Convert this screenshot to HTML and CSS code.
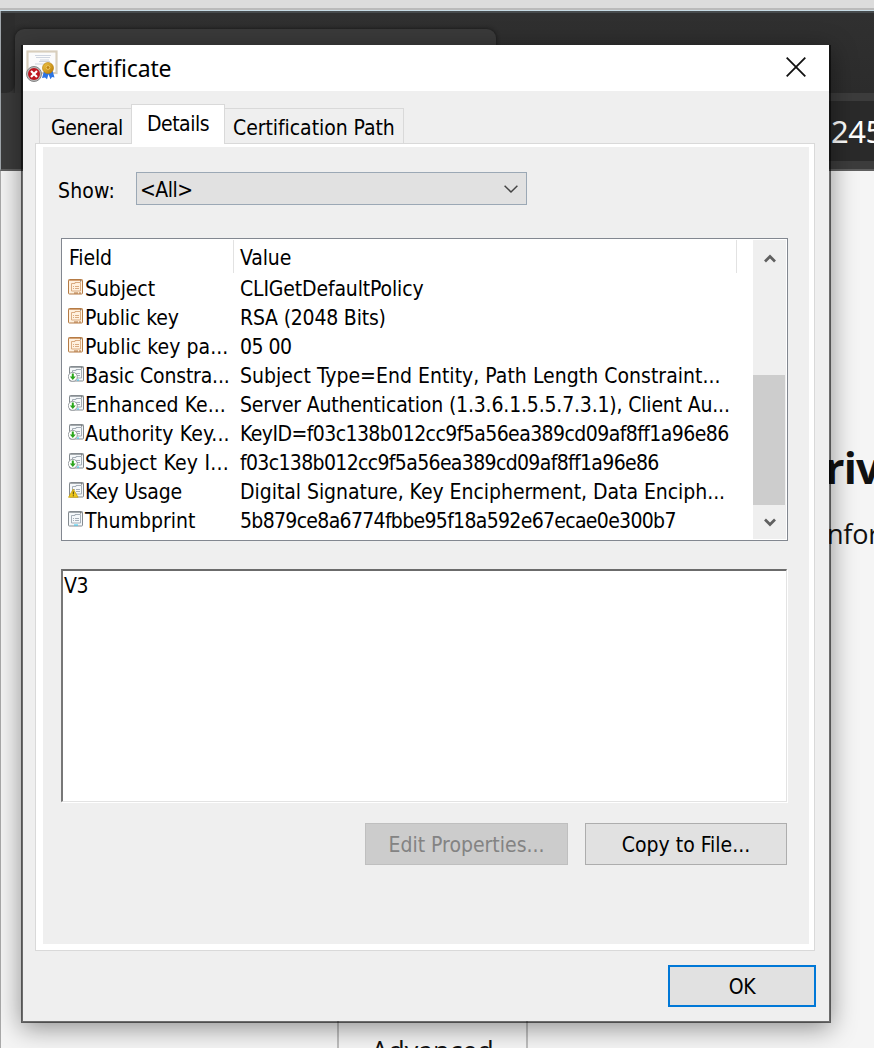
FILE: index.html
```
<!DOCTYPE html>
<html lang="en">
<head>
<meta charset="utf-8">
<title>Certificate</title>
<link rel="stylesheet" href="styles.css">
</head>
<body>
<svg class="defs" aria-hidden="true">
  <defs>
    <linearGradient id="gold" x2="1" y2="1"><stop stop-color="#efc64a"/><stop offset="1" stop-color="#b87900"/></linearGradient>
    <symbol id="sheet" viewBox="0 0 16 16">
      <rect x=".5" y=".5" width="14" height="14.5" rx=".8" class="frame"/>
      <path d="M1 1.500h13" class="band"/>
      <path d="M3.500 4.500h3.500v-1h5.500v8.500H3.500zM5 7.500h1M7 7.500h4M5 9.500h1M7 9.500h4" class="rule"/>
      <path d="M12 2h1.200" class="dot"/>
    </symbol>
    <symbol id="v1" viewBox="0 0 16 16"><use href="#sheet"/><path d="M6 14h4M11 14h2" stroke="#ad6f39"/></symbol>
    <symbol id="plain" viewBox="0 0 16 16"><use href="#sheet"/><path d="M6 14h4" stroke="#31c8f1"/></symbol>
    <symbol id="ext" viewBox="-1 0 16 16"><use href="#sheet" width="16" height="16"/><path d="M8 14h2" stroke="#31c8f1"/><circle cx="3.800" cy="10.800" r="4.500" fill="#fff" stroke="#858b90" stroke-width=".8"/><path d="M2.800 7.500h2v3h2l-3 3.600-3-3.600h2z" fill="#2ba51c"/></symbol>
    <symbol id="crit" viewBox="-1 0 16 16"><use href="#sheet" width="16" height="16"/><path d="M4.300 7-.5 15.300h9.600z" fill="#f0c91c" stroke="#c29a0c" stroke-width=".7"/><path d="M3.800 9.500h1v3h-1zM3.800 13.300h1v1h-1z" fill="#443b15"/></symbol>
  </defs>
</svg>
<div class="browser">
  <div class="edge"></div>
  <div class="tabstrip"><div class="gap"></div><div class="browser-tab"></div></div>
  <div class="toolbar"><div class="address">245</div></div>
  <div class="page">
    <h1>riv</h1>
    <p>nfor</p>
    <div class="advanced">Advanced</div>
  </div>
</div>

<div class="dialog">
  <header class="titlebar">
    <svg class="cert" viewBox="0 0 32 32">
      <rect x="1.500" y="1.500" width="29" height="21.500" fill="#fff" stroke="#d8cebd" stroke-width="2.200"/>
      <rect x="3" y="3" width="26" height="19" fill="#fbfbfc"/>
      <path d="M9 5.500h16M10 7.500h14M14 10h9M13 11.500h11M9 14h14" stroke="#c9d0dc" stroke-width=".9"/>
      <path d="M18 21l-2 7 3-.5 2 1.800 1.500-5 2 5 1.500-2.200 2.500.5-2-7z" fill="#2c74e4"/>
      <circle cx="22" cy="18" r="5.500" fill="url(#gold)" stroke="#b27700" stroke-width=".6"/>
      <circle cx="22" cy="17.500" r="1.900" fill="#bd8210" stroke="#f2d173" stroke-width=".8"/>
      <circle cx="8" cy="24" r="7.500" fill="#b9b9b9" stroke="#858585" stroke-width="1"/>
      <circle cx="8" cy="24" r="6" fill="#bd1520"/>
      <path d="M5 21l6 6M11 21l-6 6" stroke="#fff" stroke-width="2.200"/>
    </svg>
    <span class="title">Certificate</span>
    <svg class="close" viewBox="0 0 20 20"><path d="M.7.7 19.300 19.300M19.300.7.7 19.300"/></svg>
  </header>
  <nav class="tabs">
    <div class="tab general"><span>General</span></div>
    <div class="tab active"><span>Details</span></div>
    <div class="tab path"><span>Certification Path</span></div>
  </nav>
  <main class="pane">
    <div class="panel">
      <div class="show"><span class="label">Show:</span>
        <div class="combo"><span>&lt;All&gt;</span><svg viewBox="0 0 14 8"><path d="M.6.8 7 7 13.400.8"/></svg></div>
      </div>
      <div class="list">
        <div class="table">
          <div class="row head"><div>Field</div><div>Value</div></div>
          <div class="row"><svg class="tan"><use href="#v1"/></svg><span class="f1">Subject</span><span class="v1">CLIGetDefaultPolicy</span></div>
          <div class="row"><svg class="tan"><use href="#v1"/></svg><span class="f2">Public key</span><span class="v2">RSA (2048 Bits)</span></div>
          <div class="row"><svg class="tan"><use href="#v1"/></svg><span class="f3">Public key pa...</span><span class="v3">05 00</span></div>
          <div class="row"><svg><use href="#ext"/></svg><span class="f4">Basic Constra...</span><span class="v4">Subject Type=End Entity, Path Length Constraint...</span></div>
          <div class="row"><svg><use href="#ext"/></svg><span class="f5">Enhanced Ke...</span><span class="v5">Server Authentication (1.3.6.1.5.5.7.3.1), Client Au...</span></div>
          <div class="row"><svg><use href="#ext"/></svg><span class="f6">Authority Key...</span><span class="v6">KeyID=f03c138b012cc9f5a56ea389cd09af8ff1a96e86</span></div>
          <div class="row"><svg><use href="#ext"/></svg><span class="f7">Subject Key I...</span><span class="v7">f03c138b012cc9f5a56ea389cd09af8ff1a96e86</span></div>
          <div class="row"><svg><use href="#crit"/></svg><span class="f8">Key Usage</span><span class="v8">Digital Signature, Key Encipherment, Data Enciph...</span></div>
          <div class="row"><svg><use href="#plain"/></svg><span class="f9">Thumbprint</span><span class="v9">5b879ce8a6774fbbe95f18a592e67ecae0e300b7</span></div>
        </div>
        <div class="scroll">
          <svg viewBox="0 0 12 9"><path d="M1 7.500 6 2.500l5 5"/></svg>
          <div class="thumb"></div>
          <svg class="down" viewBox="0 0 12 9"><path d="M1 1.500 6 6.500l5-5"/></svg>
        </div>
      </div>
      <div class="value">V3</div>
      <div class="actions"><div class="button disabled"><span class="edit">Edit Properties...</span></div><div class="button"><span class="copy">Copy to File...</span></div></div>
    </div>
  </main>
  <footer><div class="button ok"><span>OK</span></div></footer>
</div>
</body>
</html>
```
FILE: styles.css
```
* { box-sizing: border-box; }
html, body { margin: 0; width: 874px; height: 1048px; overflow: hidden; }
body { position: relative; background: #f5f5f5; color: #000; font: 21px/29px "DejaVu Sans Condensed", "DejaVu Sans", sans-serif; font-stretch: condensed; letter-spacing: -.5px; white-space: nowrap; }
.defs { position: absolute; width: 0; height: 0; }

.browser { height: 1048px; display: flex; flex-direction: column; overflow: hidden; font-family: "Noto Sans", sans-serif; font-stretch: normal; letter-spacing: 0; }
.edge { height: 11px; flex: none; background: linear-gradient(#dcdcdc 0 8px, #bababa 8px 10px, #c7dbe5 10px); }
.tabstrip { height: 82px; flex: none; display: flex; background: linear-gradient(#474b4d 0 2px, #303030 2px, #2c2c2c); border-left: 1px solid #a0a6ab; }
.gap { width: 14px; height: 82px; background: linear-gradient(transparent 50px, #3a3a3a 50px); }
.gap::before { content: ""; display: block; height: 80px; margin-top: 2px; background: #2d2d2d; border-radius: 0 0 9px 0; }
.browser-tab { width: 481px; height: 64px; margin-top: 18px; background: #3a3a3a; border-radius: 9px 9px 0 0; box-shadow: 0 0 4px #151515; }
.toolbar { height: 78px; flex: none; padding: 8px 0 8px 700px; background: #3c3c3c; border-left: 1px solid #a0a6ab; border-bottom: 2px solid #606060; }
.address { height: 60px; padding-left: 130px; background: #2a2a2a; color: #fff; font-size: 31px; line-height: 61px; letter-spacing: -.5px; }
.page { flex: 1; display: flex; flex-direction: column; border-left: 1px solid #a9a9a9; background: #f5f5f5; color: #111; }
.page h1 { margin: 262px 0 0 824px; height: 70px; font: bold 43px/70px "Open Sans", sans-serif; letter-spacing: -.8px; }
.page p { margin: 13px 0 0 826px; height: 36px; font: 27px/36px "Open Sans", sans-serif; letter-spacing: -.2px; }
.advanced { width: 191px; height: 90px; margin: 466px 0 0 336px; border: 2px solid #bebebe; text-align: center; font: 27px/61px "Open Sans", sans-serif; letter-spacing: -.1px; }

.dialog { position: absolute; left: 21px; top: 45px; width: 810px; height: 978px; display: flex; flex-direction: column; border: solid rgba(0,0,0,.56); border-width: 0 2px 2px; background: #efefef; background-clip: padding-box; box-shadow: 0 5px 24px rgba(0,0,0,.42); }
.titlebar { height: 46px; flex: none; display: flex; align-items: center; padding: 0 23px 0 3px; background: #fff; }
.cert { width: 32px; height: 32px; margin-top: -4px; }
.title { margin-left: 5px; font: 23px/32px "Noto Sans", sans-serif; letter-spacing: -.18px; }
.close { width: 20px; height: 20px; margin-left: auto; fill: none; stroke: #111; stroke-width: 1.8; margin-top: -2px; }

.tabs { height: 52px; flex: none; display: flex; align-items: flex-end; padding-left: 16px; }
.tab { height: 35px; border: 1px solid #d9d9d9; border-bottom: 0; line-height: 38px; }
.general { width: 93px; padding-left: 11px; border-right: 0; letter-spacing: -.35px; }
.active { width: 94px; height: 40px; margin: 0 0 -1px -1px; padding-left: 15px; position: relative; background: #fff; line-height: 38px; }
.path { width: 179px; padding-left: 8px; border-left: 0; letter-spacing: -.05px; }
.pane { width: 780px; height: 808px; margin-left: 12px; flex: none; padding: 3px 5px 6px 7px; border: 1px solid #d9d9d9; background: #fff; }
.panel { height: 797px; padding: 25px 21px 0 18px; background: #efefef; }

.show { height: 33px; display: flex; margin-left: -3px; }
.label { width: 78px; line-height: 39px; letter-spacing: .15px; }
.combo { width: 391px; height: 33px; display: flex; align-items: center; justify-content: space-between; padding: 0 8px 0 3px; border: 1px solid #9ba8b5; background: #e1e1e1; }
.combo span { padding-top: 3px; }
.combo svg { width: 14px; height: 8px; overflow: visible; fill: none; stroke: #444; stroke-width: 1.5; }
.list { width: 727px; height: 303px; margin-top: 33px; padding: 1px; display: flex; border: 1px solid #828790; background: #fff; }
.table { width: 691px; padding-left: 6px; }
.row { display: grid; grid-template-columns: 16px 155px 1fr; height: 29px; line-height: 30px; }
.row svg { width: 16px; height: 16px; margin: 5px 0 0 -1px; fill: none; overflow: visible; }
.head { grid-template-columns: 165px 503px; height: 34px; line-height: 36px; letter-spacing: -.1px; }
.head div { height: 33px; border-right: 1px solid #e2e2e2; padding-left: 6px; }
.head div:first-child { padding-left: 0; }
.frame { fill: var(--paper, #f5f8fa); stroke: var(--ink, #858b90); }
.band { stroke: var(--line, #a3a9ad); }
.rule { stroke: var(--line, #9da6b0); stroke-width: .9; }
.dot { stroke: #555; }
.tan { --paper: #fff1df; --ink: #b57b45; --line: #d6a477; }

.f1, .f2 { letter-spacing: -.1px; }
.f3 { letter-spacing: .06px; }
.f4 { letter-spacing: -.17px; }
.f5 { letter-spacing: .02px; }
.f6 { letter-spacing: .13px; }
.f7 { letter-spacing: .22px; }
.f8 { letter-spacing: -.25px; }
.f9 { letter-spacing: 0; }
.v1 { letter-spacing: -.15px; }
.v2 { letter-spacing: -.2px; }
.v4 { letter-spacing: .03px; }
.v5 { letter-spacing: -.17px; }
.v6 { letter-spacing: -.57px; }
.v7 { letter-spacing: -.65px; }
.v8 { letter-spacing: -.04px; }
.v9 { letter-spacing: -.68px; }

.scroll { width: 33px; height: 299px; display: flex; flex-direction: column; align-items: flex-start; background: #efefef; }
.scroll svg { width: 12px; height: 9px; margin: 14px 0 112px 10.500px; fill: none; stroke: #606060; stroke-width: 2.700; flex: none; }
.scroll .down { margin: 13px 0 0 10.500px; }
.thumb { width: 32px; height: 130px; flex: none; background: #cdcdcd; }
.value { width: 726px; height: 233px; margin-top: 28px; padding-left: 1px; border: 1px solid #e3e3e3; border-top: 2px solid #6b6b6b; border-left: 2px solid #777; background: #fff; box-shadow: 1px 1px 0 #fff; line-height: 31px; }
.actions { display: flex; gap: 17px; padding-left: 304px; margin-top: 21px; }
.button { width: 202px; height: 42px; border: 1px solid #adadad; background: #e1e1e1; text-align: center; line-height: 42px; }
.disabled { width: 203px; background: #ccc; border-color: #bfbfbf; color: #838383; }
.edit, .copy { letter-spacing: 0; }
footer { display: flex; justify-content: flex-end; padding: 14px 13px 0 0; }
.ok { width: 148px; border: 2px solid #0078d7; line-height: 40px; }
```
